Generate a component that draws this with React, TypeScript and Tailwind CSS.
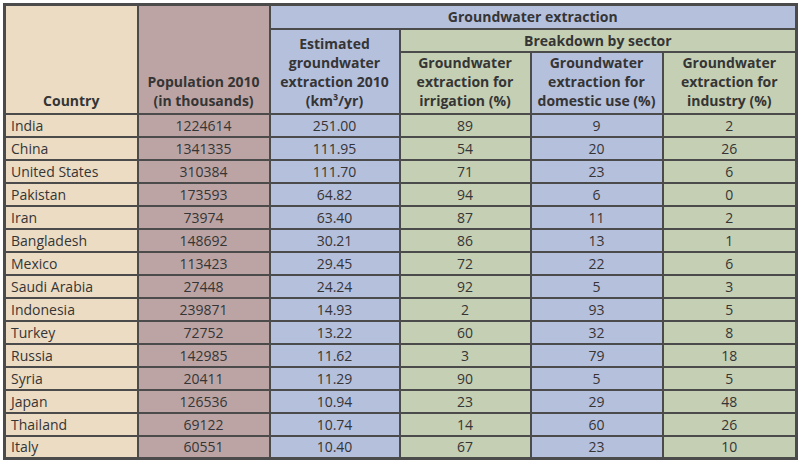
const rows: [string, string, string, string, string, string][] = [
  ['India', '1224614', '251.00', '89', '9', '2'],
  ['China', '1341335', '111.95', '54', '20', '26'],
  ['United States', '310384', '111.70', '71', '23', '6'],
  ['Pakistan', '173593', '64.82', '94', '6', '0'],
  ['Iran', '73974', '63.40', '87', '11', '2'],
  ['Bangladesh', '148692', '30.21', '86', '13', '1'],
  ['Mexico', '113423', '29.45', '72', '22', '6'],
  ['Saudi Arabia', '27448', '24.24', '92', '5', '3'],
  ['Indonesia', '239871', '14.93', '2', '93', '5'],
  ['Turkey', '72752', '13.22', '60', '32', '8'],
  ['Russia', '142985', '11.62', '3', '79', '18'],
  ['Syria', '20411', '11.29', '90', '5', '5'],
  ['Japan', '126536', '10.94', '23', '29', '48'],
  ['Thailand', '69122', '10.74', '14', '60', '26'],
  ['Italy', '60551', '10.40', '67', '23', '10'],
];

const cell = 'border-2 border-[#4b4b4b] p-0';
const head = `${cell} font-bold text-center leading-[19px]`;

export default function App() {
  return (
    <div className="w-[800px] h-[468px] bg-white pl-[3px] pt-[3px] text-[#353535] text-[14px] font-['Open_Sans',sans-serif]">
      <table className="w-[792px] table-fixed border-collapse border-[3px] border-[#4b4b4b]">
        <colgroup>
          <col className="w-[133px]" />
          <col className="w-[132px]" />
          <col className="w-[130px]" />
          <col className="w-[131px]" />
          <col className="w-[132px]" />
          <col className="w-[134px]" />
        </colgroup>
        <thead>
          <tr className="h-[24px]">
            <th rowSpan={3} className={`${head} bg-[#ecdcc4] align-bottom pb-[3px]`}>Country</th>
            <th rowSpan={3} className={`${head} bg-[#bca4a4] align-bottom pb-[3px]`}>
              Population 2010
              <br />
              (in thousands)
            </th>
            <th colSpan={4} className={`${head} bg-[#b5c0dd]`}>Groundwater extraction</th>
          </tr>
          <tr className="h-[23px]">
            <th rowSpan={2} className={`${head} bg-[#b5c0dd] align-bottom pb-[3px]`}>
              Estimated
              <br />
              groundwater
              <br />
              extraction 2010
              <br />
              (km³/yr)
            </th>
            <th colSpan={3} className={`${head} bg-[#c5cfb4]`}>Breakdown by sector</th>
          </tr>
          <tr className="h-[62px]">
            <th className={`${head} bg-[#c5cfb4] align-bottom pb-[3px]`}>
              Groundwater
              <br />
              extraction for
              <br />
              irrigation (%)
            </th>
            <th className={`${head} bg-[#b5c0dd] align-bottom pb-[3px]`}>
              Groundwater
              <br />
              extraction for
              <br />
              domestic use (%)
            </th>
            <th className={`${head} bg-[#c5cfb4] align-bottom pb-[3px]`}>
              Groundwater
              <br />
              extraction for
              <br />
              industry (%)
            </th>
          </tr>
        </thead>
        <tbody>
          {rows.map((r) => (
            <tr key={r[0]} className="h-[23px] leading-[19px]">
              <td className={`${cell} bg-[#ecdcc4] pl-[5px]`}>{r[0]}</td>
              <td className={`${cell} bg-[#bca4a4] text-center`}>{r[1]}</td>
              <td className={`${cell} bg-[#b5c0dd] text-center`}>{r[2]}</td>
              <td className={`${cell} bg-[#c5cfb4] text-center`}>{r[3]}</td>
              <td className={`${cell} bg-[#b5c0dd] text-center`}>{r[4]}</td>
              <td className={`${cell} bg-[#c5cfb4] text-center`}>{r[5]}</td>
            </tr>
          ))}
        </tbody>
      </table>
    </div>
  );
}
